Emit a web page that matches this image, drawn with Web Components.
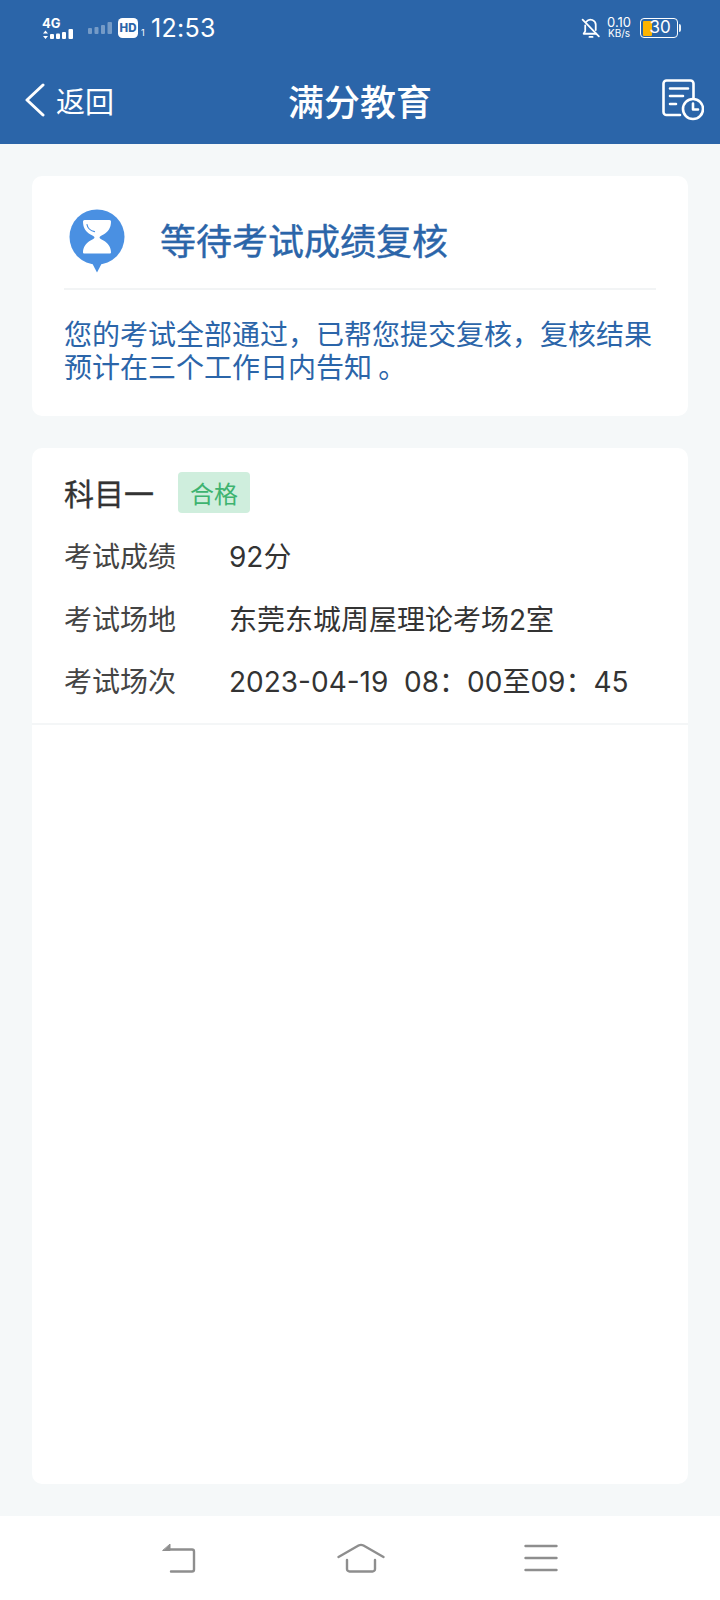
<!DOCTYPE html>
<html lang="zh">
<head>
<meta charset="utf-8">
<title>满分教育</title>
<style>
html,body{margin:0;padding:0;height:100%;}
body{font-family:"Noto Sans CJK SC","Noto Sans",sans-serif;background:#f5f8f9;}
exam-page{height:1600px;}
</style>
</head>
<body>
<exam-page>
  <status-bar slot="top"></status-bar>
  <app-header slot="top" title="满分教育" back="返回"></app-header>
  <notice-card title="等待考试成绩复核">您的考试全部通过，已帮您提交复核，复核结果预计在三个工作日内告知 。</notice-card>
  <subject-card name="科目一" tag="合格">
    <info-row label="考试成绩">92分</info-row>
    <info-row label="考试场地">东莞东城周屋理论考场2室</info-row>
    <info-row label="考试场次">2023-04-19&nbsp; 08：00至09：45</info-row>
  </subject-card>
  <nav-bar slot="bottom"></nav-bar>
</exam-page>
<script>
class examPage extends HTMLElement{
    constructor(){
        super()
        this.attachShadow({mode:"open"})
        this.shadowRoot.innerHTML=`<style>
        :host{display:flex;flex-direction:column;width:720px;background:#f5f8f9;}
        .top{flex:none;background:#2b65a9;}
        main{flex:1;min-height:0;display:flex;flex-direction:column;gap:32px;padding:32px;}
        .bottom{flex:none;}
        </style>
        <div class="top"><slot name="top"></slot></div>
        <main><slot></slot></main>
        <div class="bottom"><slot name="bottom"></slot></div>`
    }
}
class statusBar extends HTMLElement{
    constructor(){
        super()
        this.attachShadow({mode:"open"})
        this.shadowRoot.innerHTML=`<style>
        :host{display:flex;align-items:center;height:56px;color:#fff;font-family:Inter,"Noto Sans",sans-serif;}
        .left{display:flex;align-items:center;margin-left:42px;}
        .right{display:flex;align-items:center;margin-left:auto;margin-right:39px;}
        svg{display:block;}
        .net{display:grid;grid-template-columns:auto;width:33px;}
        .net span{font-size:13px;font-weight:700;line-height:12px;}
        .time{font-size:25px;line-height:30px;margin-left:4px;letter-spacing:.3px;}
        .speed{display:flex;flex-direction:column;align-items:center;margin:0 9px 0 6px;line-height:11px;}
        .speed b{font-weight:400;font-size:13px;}
        .speed i{font-style:normal;font-size:10px;}
        .batt{position:relative;width:38px;height:20px;box-sizing:border-box;border:1.5px solid #fff;border-radius:4px;font-size:17px;line-height:17px;text-align:center;}
        .batt span{position:relative;left:1px;}
        .batt::before{content:"";position:absolute;left:1.5px;top:1.5px;bottom:1.5px;width:9px;background:#fdb400;border-radius:1px;}
        .cap{width:2px;height:8px;background:#fff;margin-left:1px;border-radius:0 2px 2px 0;opacity:.9;}
        </style>
        <div class="left">
          <div class="net">
            <span>4G</span>
            <svg width="33" height="11" viewBox="0 11 33 11">
              <path d="M3.500 12.500l2.500 3h-5zM3.500 21l2.500-3h-5z" fill="#fff"/>
              <rect x="8" y="16" width="4" height="5" rx="1" fill="#fff"/>
              <rect x="14" y="15.500" width="4" height="5.500" rx="1" fill="#fff"/>
              <rect x="20" y="14" width="4" height="7" rx="1" fill="#fff"/>
              <rect x="26.500" y="11" width="4.500" height="10" rx="1" fill="#fff"/>
            </svg>
          </div>
          <svg style="margin-left:12px" width="26" height="12" viewBox="0 0 26 12" fill="#fff" opacity=".35">
            <rect x="1" y="6" width="4" height="6" rx="1"/>
            <rect x="7.500" y="5" width="4" height="7" rx="1"/>
            <rect x="14" y="3" width="4" height="9" rx="1"/>
            <rect x="20.500" y="0" width="4.500" height="12" rx="1"/>
          </svg>
          <svg style="margin-left:5px" width="20" height="20" viewBox="0 0 20 20">
            <rect width="20" height="20" rx="4.500" fill="#fff"/>
            <text x="10" y="14.200" text-anchor="middle" font-size="11.500" font-weight="800" font-family="Inter,sans-serif" fill="#2b65a9">HD</text>
          </svg>
          <svg style="margin:8px 0 0 3px" width="6" height="10" viewBox="0 0 6 10"><text x="0" y="9" font-size="9" font-family="Inter,sans-serif" fill="#fff">1</text></svg>
          <span class="time">12:53</span>
        </div>
        <div class="right">
          <svg width="20" height="21" viewBox="0 0 19 20" fill="none" stroke="#fff" stroke-width="1.700" stroke-linecap="round" stroke-linejoin="round">
            <path d="M5 3.600A5 5 0 0 1 14 7v4.500"/>
            <path d="M4 7v5.500L2.500 15h12"/>
            <path d="M8 18h3"/>
            <path d="M1.500 1.500l15.500 16"/>
          </svg>
          <div class="speed"><b>0.10</b><i>KB/s</i></div>
          <div class="batt"><span>30</span></div>
          <div class="cap"></div>
        </div>`
    }
}
class appHeader extends HTMLElement{
    constructor(){
        super()
        this.attachShadow({mode:"open"})
    }
    connectedCallback(){
        this.shadowRoot.innerHTML=`<style>
        :host{display:grid;grid-template-columns:1fr auto 1fr;align-items:center;height:88px;color:#fff;}
        .back{display:flex;align-items:center;padding-left:24px;font-size:29px;}
        .back span{margin-left:11px;line-height:40px;}
        h1{margin:0;font-size:36px;font-weight:500;line-height:50px;}
        .act{justify-self:end;padding-right:16px;}
        svg{display:block;}
        </style>
        <div class="back">
          <svg width="21" height="34" viewBox="0 0 21 34" fill="none" stroke="#fff" stroke-width="3" stroke-linecap="round" stroke-linejoin="round"><path d="M19 2L3 17l16 15"/></svg>
          <span>${this.getAttribute("back")}</span>
        </div>
        <h1>${this.getAttribute("title")}</h1>
        <div class="act">
          <svg width="42" height="42" viewBox="0 0 42 42" fill="none" stroke="#fff" stroke-width="2.600" stroke-linecap="round" stroke-linejoin="round">
            <path d="M18 36H4.500a3 3 0 0 1-3-3V4.500a3 3 0 0 1 3-3h24a3 3 0 0 1 3 3v15"/>
            <path d="M8 9.500h18M8 17h13M8 25h6"/>
            <circle cx="31" cy="30" r="10"/>
            <path d="M31 24.500v6h5"/>
          </svg>
        </div>`
    }
}
class noticeCard extends HTMLElement{
    constructor(){
        super()
        this.attachShadow({mode:"open"})
    }
    connectedCallback(){
        this.shadowRoot.innerHTML=`<style>
        :host{display:block;flex:none;box-sizing:border-box;height:240px;background:#fff;border-radius:10px;padding:0 32px;color:#2b65a9;}
        .head{display:flex;align-items:center;height:98px;padding-top:14px;border-bottom:2px solid #f2f4f5;}
        svg{display:block;margin:4px 0 0 5px;}
        h2{margin:0 0 0 35px;font-size:36px;font-weight:400;-webkit-text-stroke:.4px #2b65a9;line-height:50px;}
        p{margin:0;padding-top:27px;font-size:28px;line-height:33px;width:592px;}
        </style>
        <div class="head">
          <svg width="56" height="64" viewBox="0 0 56 64">
            <circle cx="28" cy="28" r="27.500" fill="#4a90e2"/>
            <path d="M22.500 53h11L28 63.500z" fill="#4a90e2"/>
            <path d="M15.500 11h25a1.500 1.500 0 0 1 1.500 1.500c0 6.500-3 10.500-7.500 13-2 1.200-4 2-4 3s2 1.800 4 3c4.500 2.500 7.500 6.500 7.500 12a1 1 0 0 1-1 1H15a1 1 0 0 1-1-1c0-5.500 3-9.500 7.500-12 2-1.200 4-2 4-3s-2-1.800-4-3C17 23 14 19 14 12.500a1.500 1.500 0 0 1 1.500-1.500z" fill="#fff"/>
            <path d="M18 15.500c.5 3.500 3 6 7.500 7.200" fill="none" stroke="#4a90e2" stroke-width="1.200" stroke-linecap="round"/>
          </svg>
          <h2>${this.getAttribute("title")}</h2>
        </div>
        <p><slot></slot></p>`
    }
}
class subjectCard extends HTMLElement{
    constructor(){
        super()
        this.attachShadow({mode:"open"})
    }
    connectedCallback(){
        this.shadowRoot.innerHTML=`<style>
        :host{display:block;flex:1;min-height:0;background:#fff;border-radius:10px;color:#333;}
        .wrap{border-bottom:2px solid #f4f6f7;padding:24px 32px 11px;}
        .name{display:flex;align-items:center;height:41px;margin-bottom:11px;}
        h3{margin:0;font-size:30px;font-weight:400;-webkit-text-stroke:.35px #333;line-height:41px;}
        .tag{margin-left:24px;width:72px;height:41px;line-height:41px;text-align:center;border-radius:4px;background:#cfeedd;color:#3eb370;font-size:24px;}
        </style>
        <div class="wrap">
          <div class="name"><h3>${this.getAttribute("name")}</h3><span class="tag">${this.getAttribute("tag")}</span></div>
          <slot></slot>
        </div>`
    }
}
class infoRow extends HTMLElement{
    constructor(){
        super()
        this.attachShadow({mode:"open"})
    }
    connectedCallback(){
        this.shadowRoot.innerHTML=`<style>
        :host{display:grid;grid-template-columns:165px 1fr;height:62.500px;align-items:center;font-size:28px;color:#333;}
        .l{color:#444;}
        .v{font-family:Inter,"Noto Sans CJK SC",sans-serif;}
        </style>
        <span class="l">${this.getAttribute("label")}</span><span class="v"><slot></slot></span>`
    }
}
class navBar extends HTMLElement{
    constructor(){
        super()
        this.attachShadow({mode:"open"})
        this.shadowRoot.innerHTML=`<style>
        :host{display:flex;gap:140px;align-items:center;height:84px;background:#fff;padding:0 0 0 161px;box-sizing:border-box;}
        svg{display:block;}
        svg:last-child{margin-left:-1px;}
        </style>
        <svg width="36" height="30" viewBox="0 0 36 30" fill="none" stroke="#8e8e8e" stroke-width="2.400" stroke-linecap="round" stroke-linejoin="round">
          <path d="M8 6.500h23a2 2 0 0 1 2 2v18a2 2 0 0 1-2 2H10"/>
          <path d="M9 1.500v6H2z" fill="#8e8e8e" stroke-width="1"/>
        </svg>
        <svg width="48" height="30" viewBox="0 0 48 30" fill="none" stroke="#8e8e8e" stroke-width="2.400" stroke-linecap="round" stroke-linejoin="round">
          <path d="M1.500 14L21.500 2.500q2.500-1.300 5 0L46.500 14"/>
          <path d="M10 17v9a2.500 2.500 0 0 0 2.500 2.500h23A2.500 2.500 0 0 0 38 26v-9"/>
        </svg>
        <svg width="34" height="28" viewBox="0 0 34 28" fill="none" stroke="#8e8e8e" stroke-width="2.400" stroke-linecap="round">
          <path d="M1.500 2h31M1.500 14h31M1.500 26h31"/>
        </svg>`
    }
}
customElements.define("exam-page",examPage)
customElements.define("status-bar",statusBar)
customElements.define("app-header",appHeader)
customElements.define("notice-card",noticeCard)
customElements.define("subject-card",subjectCard)
customElements.define("info-row",infoRow)
customElements.define("nav-bar",navBar)
</script>
</body>
</html>
